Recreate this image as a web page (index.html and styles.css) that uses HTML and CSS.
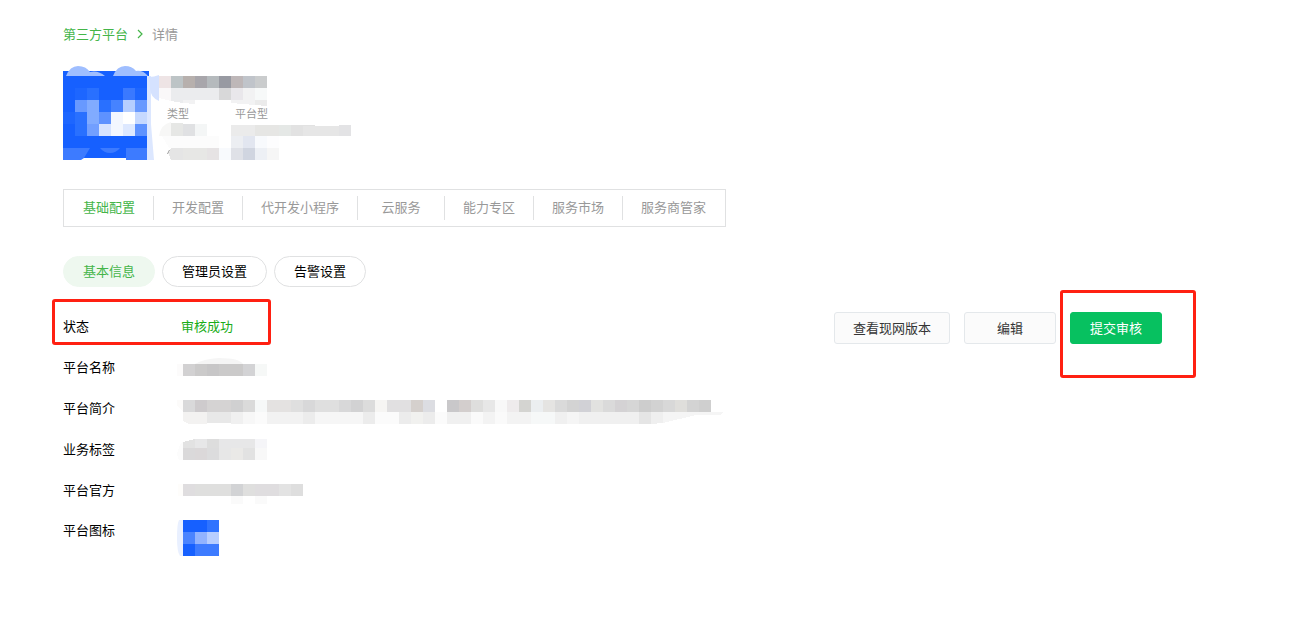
FILE: index.html
```html
<!DOCTYPE html>
<html lang="zh-CN">
<head>
<meta charset="utf-8">
<meta name="viewport" content="width=device-width, initial-scale=1">
<title>第三方平台 - 详情</title>
<link rel="stylesheet" href="styles.css">
</head>
<body>
<main class="page">
  <nav class="breadcrumb" aria-label="breadcrumb">
    <a class="breadcrumb-link" href="#">第三方平台</a>
    <svg class="breadcrumb-arrow" width="6" height="10" viewBox="0 0 6 10" aria-hidden="true"><path d="M1 1l4 4-4 4" fill="none" stroke="#44b549" stroke-width="1.2"/></svg>
    <span class="breadcrumb-current">详情</span>
  </nav>

  <header class="profile">
    <svg class="mosaic" width="96" height="94" viewBox="63 66 96 94" aria-hidden="true">
      <path fill="#dce7ff" d="M147 76h4v48l3 36h-7z"/>
      <path fill="#1660ff" d="M63 71h86v5h-2v82H63z"/>
      <g fill="#9fbeff">
        <path d="M66 76q4-10 12-10 8 0 12 6 8-2 15 4z"/>
        <path d="M113 76q4-10 12-10 7 0 11 5 7-1 12 5z"/>
      </g>
      <path fill="#d5e2ff" d="M159 75v26q-9-4-9-13 0-5-1-11 5 0 10-2z"/>
      <g shape-rendering="crispEdges">
        <path fill="#1d66ff" d="M75 88h12v12H75zM135 88h12v12h-12zM63 112h12v12H63z"/>
        <path fill="#2970ff" d="M87 88h12v12H87zM99 100h12v12H99zM75 112h12v24H75z"/>
        <path fill="#3a79ff" d="M123 88h12v12h-12z"/>
        <path fill="#4683ff" d="M111 100h12v12h-12z"/>
        <path fill="#6899ff" d="M75 100h12v12H75zM135 100h12v12h-12z"/>
        <path fill="#81abff" d="M87 100h12v24H87z"/>
        <path fill="#b5ceff" d="M123 100h12v12h-12z"/>
        <path fill="#5e92ff" d="M99 112h12v12H99zM135 124h12v12h-12z"/>
        <path fill="#f3f7ff" d="M111 112h12v24h-12z"/>
        <path fill="#ffffff" d="M123 112h12v12h-12z"/>
        <path fill="#c6d9ff" d="M135 112h12v12h-12z"/>
        <path fill="#729fff" d="M87 124h12v12H87z"/>
        <path fill="#d6e3ff" d="M99 124h12v12H99z"/>
        <path fill="#dde8ff" d="M123 124h12v12h-12z"/>
      </g>
      <path fill="#3d7bff" d="M63 148h27l-6 10-3 2H63zM100 148h20q-4 5-10 5t-10-5zM126 148h21v12h-21z"/>
    </svg>
    <div class="profile-body">
      <svg class="mosaic" width="108" height="40" viewBox="159 66 108 40" shape-rendering="crispEdges" aria-hidden="true">
        <path fill="#eee4e5" d="M159 76h12v12h-12z"/><path fill="#bdc4c6" d="M171 76h12v12h-12z"/>
        <path fill="#b7b0ad" d="M183 76h12v12h-12z"/><path fill="#a8a6ab" d="M195 76h12v12h-12z"/>
        <path fill="#b5babd" d="M207 76h12v12h-12z"/><path fill="#989aa2" d="M219 76h12v12h-12z"/>
        <path fill="#beb7b8" d="M231 76h12v12h-12z"/><path fill="#c0c4ca" d="M243 76h12v12h-12z"/>
        <path fill="#cacccd" d="M255 76h12v12h-12z"/>
        <path fill="#faf8f9" d="M159 88h12v13l-12-3z"/><path fill="#ebecee" d="M171 88h12v15l-12-2zM183 88h12v12h-12zM195 88h12v12h-12zM207 88h12v12h-12z"/>
        <path fill="#d8d8d9" d="M219 88h12v12h-12z"/><path fill="#e9e7eb" d="M231 88h12v12h-12z"/>
        <path fill="#f2f2f3" d="M243 88h12v12h-12zM183 100h12v4l-12-1zM231 100h24v5l-24-2z"/>
        <path fill="#f7f9f9" d="M255 88h12v12h-12z"/><path fill="#ebebeb" d="M255 100h12v6l-12-1z"/>
      </svg>
      <dl class="meta">
        <dt class="meta-label">类型</dt>
        <dd class="meta-value">平台型</dd>
      </dl>
      <svg class="mosaic" width="194" height="40" viewBox="159 120 194 40" aria-hidden="true">
        <path fill="#f7f7f6" d="M171 122v14h-12q2-12 12-14z"/>
        <g shape-rendering="crispEdges">
        <path fill="#e6e7e5" d="M171 123l24 1v12h-24z"/><path fill="#e0e1e3" d="M183 124h12v12h-12z"/><path fill="#f4f6f6" d="M195 124h12v12h-12z"/>
        <path fill="#fcfcfc" d="M162 136h57v12h-50z"/>
        <path fill="#ebebeb" d="M231 125h24v11h-24z"/><path fill="#e6e6e4" d="M255 125h24v11h-24z"/>
        <path fill="#e5e8e6" d="M279 125h12v11h-12z"/><path fill="#e2e2e2" d="M291 125h24v11h-24z"/>
        <path fill="#e6e6e6" d="M303 126h36v10h-36z"/><path fill="#e3e3e5" d="M339 125h12v11h-12z"/>
        <path fill="#eceef2" d="M231 136h12v12h-12z"/><path fill="#e2e6f0" d="M243 136h12v12h-12z"/>
        <path fill="#f8fafd" d="M255 136h12v12h-12zM219 148h12v12h-12z"/><path fill="#fdfdfe" d="M267 136h12v12h-12z"/>
        <path fill="#e5e5e5" d="M171 148h12v12h-12l-2-6z"/><path fill="#e7e7e5" d="M183 148h24v12h-24z"/><path fill="#e6e3e4" d="M207 148h12v12h-12z"/>
        <path fill="#dfe1e7" d="M231 148h12v12h-12z"/><path fill="#d0d5e0" d="M243 148h12v12h-12z"/>
        <path fill="#edf0f5" d="M255 148h12v12h-12z"/><path fill="#f6f6f6" d="M267 148h12v12h-12z"/>
        </g>
        <path d="M169.500 150l-2 4" stroke="#999" fill="none"/>
      </svg>
    </div>
  </header>

  <nav class="tabs" aria-label="配置">
    <a class="tab tab-active" href="#">基础配置</a>
    <a class="tab" href="#">开发配置</a>
    <a class="tab" href="#">代开发小程序</a>
    <a class="tab" href="#">云服务</a>
    <a class="tab" href="#">能力专区</a>
    <a class="tab" href="#">服务市场</a>
    <a class="tab" href="#">服务商管家</a>
  </nav>

  <div class="pills">
    <button class="pill pill-active" type="button">基本信息</button>
    <button class="pill" type="button">管理员设置</button>
    <button class="pill" type="button">告警设置</button>
  </div>

  <section class="details">
    <dl class="fields">
      <div class="field field-status">
        <dt class="field-label">状态</dt>
        <dd class="field-value status-ok">审核成功</dd>
        <span class="mark mark-status"></span>
      </div>
      <div class="field">
        <dt class="field-label">平台名称</dt>
        <dd class="field-value">
          <svg class="mosaic" width="90" height="24" viewBox="177 356 90 24" aria-hidden="true">
            <path fill="#f5f5f5" d="M195 364q8-5 24-6 20 0 24 6z"/>
            <g shape-rendering="crispEdges"><path fill="#fcfbfb" d="M177 364h6v12h-6z"/><path fill="#d2d1d2" d="M183 364h12v12h-12z"/><path fill="#cbcaca" d="M195 364h48v12h-48z"/><path fill="#c7c6c7" d="M207 364h12v12h-12z"/><path fill="#d3d3d5" d="M243 364h12v12h-12z"/><path fill="#f6f8f7" d="M255 364h12v12h-12z"/></g>
          </svg>
        </dd>
      </div>
      <div class="field">
        <dt class="field-label">平台简介</dt>
        <dd class="field-value">
          <svg class="mosaic" width="546" height="30" viewBox="177 394 546 30" shape-rendering="crispEdges" aria-hidden="true">
            <path fill="#fcfbfa" d="M177 400h6v12l-6-6z"/>
            <path fill="#d9d9da" d="M183 400h12v12h-12z"/><path fill="#cecbcd" d="M195 400h12v12h-12z"/><path fill="#d5d3d3" d="M207 400h36v12h-36z"/><path fill="#d0d0d1" d="M231 400h12v12h-12z"/><path fill="#dadada" d="M243 400h12v12h-12z"/><path fill="#f6f8f8" d="M255 400h12v12h-12z"/>
            <path fill="#e4e2e1" d="M267 400h24v12h-24z"/><path fill="#dfdfdf" d="M291 400h12v12h-12zM315 400h36v12h-36z"/><path fill="#d8d8d9" d="M303 400h12v12h-12zM339 400h12v12h-12z"/><path fill="#d2d2d3" d="M351 400h12v12h-12z"/><path fill="#dcdcdc" d="M363 400h12v12h-12z"/><path fill="#f6f5f3" d="M375 400h12v12h-12z"/>
            <path fill="#e1e0e1" d="M387 400h24v12h-24z"/><path fill="#d5d0cd" d="M411 400h12v12h-12z"/><path fill="#dcdde2" d="M423 400h12v12h-12z"/>
            <path fill="#c9c8ca" d="M447 400h12v12h-12z"/><path fill="#d3cecd" d="M459 400h12v12h-12z"/><path fill="#dededd" d="M471 400h12v12h-12z"/><path fill="#e7e7e7" d="M483 400h12v12h-12z"/><path fill="#f8f8f8" d="M495 400h12v12h-12z"/><path fill="#eeebec" d="M507 400h12v12h-12z"/><path fill="#d4d4d1" d="M519 400h12v12h-12z"/><path fill="#ebeef0" d="M531 400h12v12h-12z"/><path fill="#e5e4e2" d="M543 400h12v12h-12z"/><path fill="#dadada" d="M555 400h12v12h-12z"/><path fill="#d3d3d3" d="M567 400h12v12h-12z"/><path fill="#d1d1d6" d="M579 400h12v12h-12z"/><path fill="#e2e2e0" d="M591 400h12v12h-12z"/><path fill="#dadada" d="M603 400h12v12h-12z"/><path fill="#d4d2d4" d="M615 400h12v12h-12z"/><path fill="#d6d6d6" d="M627 400h12v12h-12z"/><path fill="#cdcdcd" d="M639 400h12v12h-12z"/><path fill="#d2d2d2" d="M651 400h12v12h-12z"/><path fill="#d8d8d8" d="M663 400h12v12h-12z"/><path fill="#dfdedb" d="M675 400h12v12h-12z"/><path fill="#d3d3d3" d="M687 400h12v12h-12z"/><path fill="#cfcfcf" d="M699 400h12v12h-12z"/>
            <path fill="#f3f2f1" d="M183 412h24v12h-18l-6-3z"/><path fill="#e8e8e8" d="M207 412h24v11h-24z"/><path fill="#f0f0f0" d="M231 412h12v12h-12z"/><path fill="#f7f7f7" d="M243 412h12v12h-12z"/><path fill="#fbfbfb" d="M255 412h12v12h-12zM375 412h24v12h-24zM435 412h12v12h-12z"/><path fill="#f2f2f2" d="M267 412h48v12h-48z"/><path fill="#ececec" d="M303 412h12v12h-12zM363 412h12v12h-12zM399 412h12v12h-12zM423 412h12v12h-12z"/><path fill="#f6f6f6" d="M315 412h48v12h-48z"/><path fill="#f1f1ef" d="M411 412h12v12h-12z"/>
            <path fill="#f0f0f0" d="M447 412h24v12h-24z"/><path fill="#fafafa" d="M471 412h12v12h-12zM495 412h12v12h-12z"/><path fill="#f3f3f3" d="M483 412h12v12h-12zM507 412h24v12h-24z"/><path fill="#f6f8f8" d="M531 412h24v12h-24z"/><path fill="#f0f0f0" d="M555 412h12v12h-12zM579 412h60v12h-60z"/><path fill="#f5f5f5" d="M567 412h12v12h-12z"/><path fill="#e5e5e5" d="M639 412h12v12h-12z"/><path fill="#efefef" d="M651 412h12v11l-12 1z"/><path fill="#f5f5f5" d="M663 412h60l-3 3h-24l-33 8z"/>
          </svg>
        </dd>
      </div>
      <div class="field">
        <dt class="field-label">业务标签</dt>
        <dd class="field-value">
          <svg class="mosaic" width="90" height="22" viewBox="177 439 90 22" shape-rendering="crispEdges" aria-hidden="true">
            <path fill="#fcfcfc" d="M183 442v18h-4l-2-6 3-10z"/><path fill="#e2e2e2" d="M183 442l12-3v9h-12z"/><path fill="#e7e7e8" d="M195 439h12v9h-12zM219 439h36v9h-36z"/><path fill="#dddddd" d="M207 439h12v9h-12z"/><path fill="#f5f5f8" d="M255 439h12v9h-12z"/><path fill="#dad9da" d="M183 448h24v12h-24z"/><path fill="#dbd8d9" d="M195 448h12v12h-12z"/><path fill="#dcdcdd" d="M207 448h12v12h-12z"/><path fill="#e7e7e7" d="M219 448h12v12h-12z"/><path fill="#eae9e7" d="M231 448h12v12h-12z"/><path fill="#e2e2e2" d="M243 448h12v12h-12z"/><path fill="#f8f8f8" d="M255 448h12v12h-12z"/>
          </svg>
        </dd>
      </div>
      <div class="field">
        <dt class="field-label">平台官方</dt>
        <dd class="field-value">
          <svg class="mosaic" width="126" height="30" viewBox="177 476 126 30" shape-rendering="crispEdges" aria-hidden="true">
            <path fill="#fefdfb" d="M178 484h5v12h-5z"/><path fill="#dfdddf" d="M183 484h12v12h-12zM255 484h12v12h-12z"/><path fill="#dfdfde" d="M195 484h36v12h-36zM243 484h12v12h-12z"/><path fill="#d2d3d5" d="M231 484h12v12h-12z"/><path fill="#dfdddf" d="M267 484h12v12h-12z"/><path fill="#e3e3e3" d="M279 484h12v12h-12z"/><path fill="#dedede" d="M291 484h12v12h-12z"/><path fill="#fafafa" d="M231 496h12v8h-12zM255 496h12v8h-12z"/>
          </svg>
        </dd>
      </div>
      <div class="field field-icon">
        <dt class="field-label">平台图标</dt>
        <dd class="field-value">
          <svg class="mosaic" width="42" height="36" viewBox="177 520 42 36" aria-hidden="true">
            <path fill="#e9f0ff" d="M183 520v36h-3q-3-4-3-18t2-18z"/>
            <g shape-rendering="crispEdges"><path fill="#1660ff" d="M183 520h24v12h-24zM183 544h12v12h-12z"/><path fill="#2f73ff" d="M207 520h12v12h-12z"/><path fill="#4a84ff" d="M183 532h12v12h-12z"/><path fill="#91b3ff" d="M195 532h12v12h-12z"/><path fill="#b7ceff" d="M207 532h12v12h-12z"/><path fill="#3d7bff" d="M195 544h24v12h-24z"/></g>
          </svg>
        </dd>
      </div>
    </dl>
    <div class="actions">
      <button class="btn" type="button">查看现网版本</button>
      <button class="btn" type="button">编辑</button>
      <div class="submit">
        <button class="btn btn-primary" type="button">提交审核</button>
        <span class="mark mark-submit"></span>
      </div>
    </div>
  </section>
</main>
</body>
</html>
```
FILE: styles.css
```css
* {
  box-sizing: border-box;
}

body {
  margin: 0;
  background: #fff;
  color: #000;
  font: 13px/20px "Noto Sans CJK SC", sans-serif;
}

a {
  text-decoration: none;
}

dl,
dd {
  margin: 0;
}

button {
  font: inherit;
  cursor: pointer;
}

.page {
  padding: 24px 131px 40px 63px;
}

.mosaic {
  display: block;
}

.breadcrumb {
  display: flex;
  align-items: center;
  color: #999;
}

.breadcrumb-link {
  color: #44b549;
}

.breadcrumb-arrow {
  margin: 0 9px;
}

.profile {
  display: flex;
  margin-top: 22px;
}

.meta {
  display: flex;
  padding-left: 8px;
  color: #999;
  font-size: 11px;
  line-height: 14px;
}

.meta-label {
  width: 68px;
}

.tabs {
  display: flex;
  align-items: center;
  width: fit-content;
  margin-top: 29px;
  padding: 6px 1px;
  border: 1px solid #e0e1e2;
}

.tab {
  min-width: 87px;
  padding: 0 18px 2px;
  border-right: 1px solid #e0e1e2;
  color: #999;
  line-height: 22px;
  text-align: center;
}

.tab:last-child {
  border-right: 0;
}

.tab-active {
  color: #44b549;
}

.pills {
  display: flex;
  gap: 7px;
  margin-top: 29px;
}

.pill {
  height: 31px;
  padding: 0 19px 2px;
  border: 1px solid #e0e1e2;
  border-radius: 16px;
  background: #fff;
  color: #000;
}

.pill-active {
  border-color: #eef8ef;
  background: #eef8ef;
  color: #44b549;
}

.details {
  display: flex;
  justify-content: space-between;
  align-items: flex-start;
  margin-top: 19px;
}

.field {
  display: flex;
  align-items: center;
  height: 41px;
}

.field-status {
  position: relative;
}

.field-label,
.status-ok {
  padding-bottom: 2px;
}

.field-label {
  width: 114px;
}

.field-icon {
  align-items: flex-start;
  height: auto;
  padding-top: 9px;
}

.status-ok {
  padding-left: 4px;
  color: #1aad19;
}

.actions {
  display: flex;
  gap: 14px;
  margin-top: 6px;
}

.btn {
  min-width: 92px;
  height: 32px;
  padding: 0 18px;
  border: 1px solid #e4e8eb;
  border-radius: 3px;
  background: #fbfbfb;
  color: #353535;
}

.btn-primary {
  border-color: #07c160;
  background: #07c160;
  color: #fff;
}

.submit {
  position: relative;
}

.mark {
  position: absolute;
  border: 3px solid #ff2012;
  border-radius: 3px;
  pointer-events: none;
}

.mark-status {
  top: -7px;
  left: -11px;
  width: 219px;
  height: 46px;
}

.mark-submit {
  top: -22px;
  left: -10px;
  width: 136px;
  height: 88px;
}
```
